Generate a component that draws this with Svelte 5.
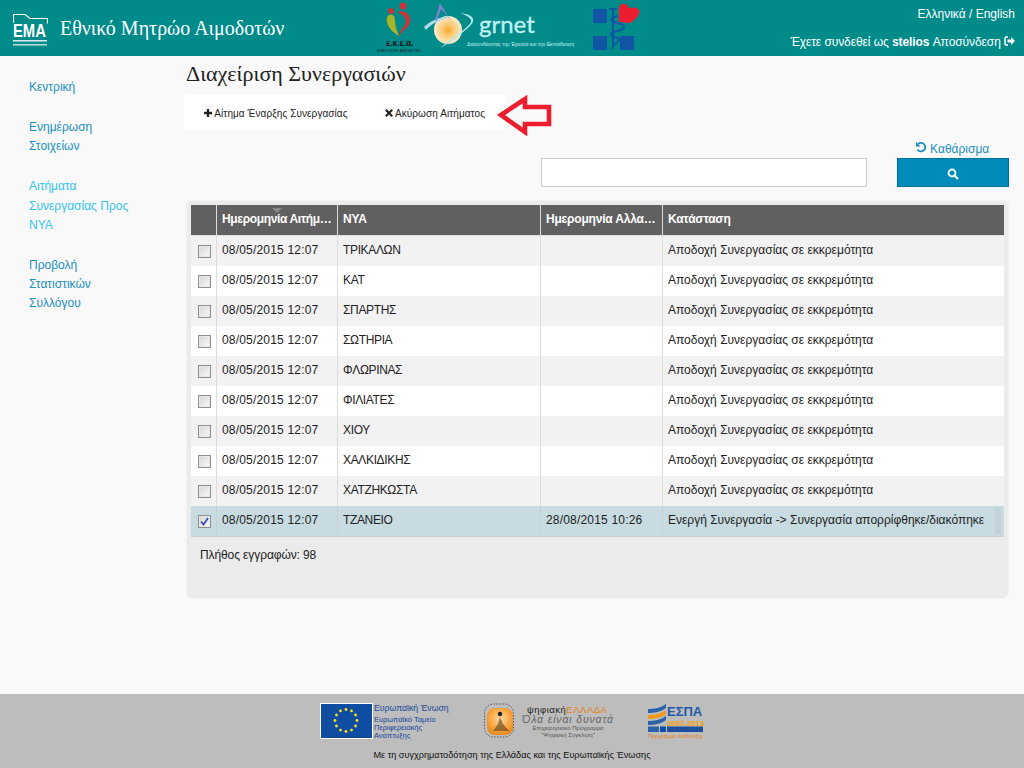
<script>
  const sideGroups = [
    { lines: ['Κεντρική'] },
    { lines: ['Ενημέρωση', 'Στοιχείων'] },
    { lines: ['Αιτήματα', 'Συνεργασίας Προς', 'ΝΥΑ'], active: true },
    { lines: ['Προβολή', 'Στατιστικών', 'Συλλόγου'] }
  ];

  const pending = 'Αποδοχή Συνεργασίας σε εκκρεμότητα';
  const date = '08/05/2015 12:07';
  const rows = [
    { nya: 'ΤΡΙΚΑΛΩΝ', changed: '', status: pending },
    { nya: 'ΚΑΤ', changed: '', status: pending },
    { nya: 'ΣΠΑΡΤΗΣ', changed: '', status: pending },
    { nya: 'ΣΩΤΗΡΙΑ', changed: '', status: pending },
    { nya: 'ΦΛΩΡΙΝΑΣ', changed: '', status: pending },
    { nya: 'ΦΙΛΙΑΤΕΣ', changed: '', status: pending },
    { nya: 'ΧΙΟΥ', changed: '', status: pending },
    { nya: 'ΧΑΛΚΙΔΙΚΗΣ', changed: '', status: pending },
    { nya: 'ΧΑΤΖΗΚΩΣΤΑ', changed: '', status: pending },
    {
      nya: 'ΤΖΑΝΕΙΟ',
      changed: '28/08/2015 10:26',
      status: 'Ενεργή Συνεργασία -> Συνεργασία απορρίφθηκε/διακόπηκε',
      selected: true
    }
  ];

  // stars of the EU flag, on a circle
  const stars = Array.from({ length: 12 }, (_, i) => ({
    x: 26 + 11 * Math.cos((i * Math.PI) / 6),
    y: 17.5 + 11 * Math.sin((i * Math.PI) / 6)
  }));
</script>

<div class="page">
  <header class="topbar">
    <div class="brand">
      <svg class="ema" width="35" height="34" viewBox="0 0 35 34">
        <path d="M.5 9V.5H12l5 4h17.500v5" fill="none" stroke="#fff" stroke-width="1.200" />
        <text x="0" y="23" class="ema-text" transform="scale(0.8 1)">ΕΜΑ</text>
        <rect x="0" y="26" width="34" height="1.500" fill="#d8eeee" />
        <rect x="0" y="30" width="34" height="1.500" fill="#b8e0e0" />
      </svg>
      <span class="site-name">Εθνικό Μητρώο Αιμοδοτών</span>
    </div>

    <div class="partners">
      <svg width="44" height="54" viewBox="0 0 44 54">
        <circle cx="26" cy="6" r="3.500" fill="#c8343a" />
        <circle cx="14" cy="11" r="3" fill="#c8343a" />
        <path d="M20 12c9-3 15 4 13 11-2 5-8 8-11 13 0-6 6-9 7-14 0-5-4-8-9-10z" fill="#c8343a" />
        <path d="M12 15c5-1 6 2 6 6 0 5 2 10 4 15-7-4-11-9-12-14-1-3 0-6 2-7z" fill="#a8b428" />
        <text x="9" y="46" class="ekea">ε.κ.ε.α.</text>
        <text x="0" y="52" class="ekea-sub">ΕΘΕΛΟΝΤΕΣ ΑΙΜΟΔΟΤΕΣ</text>
      </svg>

      <svg width="157" height="54" viewBox="0 0 157 54">
        <defs>
          <radialGradient id="sun">
            <stop offset="0" stop-color="#f5a623" />
            <stop offset="0.35" stop-color="#fbc56b" />
            <stop offset="1" stop-color="#fdeccb" />
          </radialGradient>
        </defs>
        <circle cx="24" cy="30" r="14" fill="url(#sun)" />
        <path d="M0 27C7 20 18 16 28 17 18 19 8 23 2 30z" fill="#a8d8ea" />
        <path d="M11 20C13 13 15 7 16 3c3 5 8 13 12 20C24 16 19 11 17 9 16 12 14 17 13 21z" fill="#7f86cf" />
        <path d="M36 13c10 1 18 5 10 13-8 7-18 16-30 22 12-10 28-20 31-26 1-4-5-7-11-9z" fill="#b4e6ea" />
        <text x="55" y="33" class="grnet-name">grnet</text>
        <text x="43" y="46" class="grnet-tag">Διασυνδέοντας την Έρευνα και την Εκπαίδευση</text>
      </svg>

      <svg class="moh" width="48" height="54" viewBox="0 0 48 54">
        <rect x="1" y="9" width="14" height="14" fill="#1155a5" />
        <rect x="1" y="36" width="14" height="14" fill="#1155a5" />
        <rect x="28" y="36" width="14" height="14" fill="#1155a5" />
        <path d="M21 8v41" stroke="#1155a5" stroke-width="2" />
        <path d="M17 9h8M26 16c-9 2-9 5 0 7s8 6-1 8-7 5 0 7-5 6-4 8" fill="none" stroke="#1155a5" stroke-width="2" />
        <path d="M38 23l-10-1c-2-1-1-4-1-8-1-5 0-9 3-10 3-1 6 1 7 4 3-1 8-1 10 2 2 4-3 9-9 13z" fill="#ed1c2e" />
      </svg>
    </div>

    <div class="account">
      <div class="lang">Ελληνικά / English</div>
      <div class="user">
        Έχετε συνδεθεί ως <b>stelios</b> Αποσύνδεση
        <svg width="11" height="10" viewBox="0 0 11 10">
          <path d="M4 1H2a1 1 0 0 0-1 1v6a1 1 0 0 0 1 1h2" fill="none" stroke="#fff" stroke-width="1.500" />
          <path d="M3.500 3.500H7V1l4 4-4 4V6.500H3.500z" fill="#fff" />
        </svg>
      </div>
    </div>
  </header>

  <div class="content">
    <nav class="sidebar">
      {#each sideGroups as group}
        <div class="side-group" class:active={group.active}>
          {#each group.lines as line}
            <div>{line}</div>
          {/each}
        </div>
      {/each}
    </nav>

    <main class="main">
      <h1>Διαχείριση Συνεργασιών</h1>

      <div class="toolbar-wrap">
        <div class="toolbar">
          <span class="tool">
            <svg width="8" height="8" viewBox="0 0 9 9"><path d="M3.200 0h2.600v3.200H9v2.600H5.800V9H3.200V5.800H0V3.200h3.200z" fill="#222" /></svg>
            Αίτημα Έναρξης Συνεργασίας
          </span>
          <span class="tool cancel">
            <svg width="8" height="8" viewBox="0 0 8 8"><path d="M1.500 0L4 2.500 6.500 0 8 1.500 5.500 4 8 6.500 6.500 8 4 5.500 1.500 8 0 6.500 2.500 4 0 1.500z" fill="#222" /></svg>
            Ακύρωση Αιτήματος
          </span>
        </div>
        <svg class="arrow" width="58" height="44" viewBox="0 0 58 44">
          <path d="M4 23L28 7v8h24v17H28v8z" fill="none" stroke="#ed1c2e" stroke-width="4.600" />
        </svg>
      </div>

      <div class="search">
        <input type="text" class="search-input" />
        <div class="search-side">
          <span class="clear">
            <svg width="12" height="12" viewBox="0 0 12 12">
              <path d="M3 3a4.300 4.300 0 1 1-.6 5.500" fill="none" stroke="#1b8fbf" stroke-width="1.800" />
              <path d="M1 1v4.500h4.500z" fill="#1b8fbf" />
            </svg>
            Καθάρισμα
          </span>
          <button class="search-btn" aria-label="search">
            <svg width="12" height="12" viewBox="0 0 12 12">
              <circle cx="5" cy="5" r="3.500" fill="none" stroke="#fff" stroke-width="1.800" />
              <path d="M7.500 7.500L11 11" stroke="#fff" stroke-width="2.200" />
            </svg>
          </button>
        </div>
      </div>

      <section class="grid">
        <table>
          <colgroup>
            <col class="c-check" />
            <col class="c-date" />
            <col class="c-nya" />
            <col class="c-changed" />
            <col />
          </colgroup>
          <thead>
            <tr>
              <th></th>
              <th class="sorted">Ημερομηνία Αιτήματος</th>
              <th>ΝΥΑ</th>
              <th>Ημερομηνία Αλλαγής</th>
              <th>Κατάσταση</th>
            </tr>
          </thead>
          <tbody>
            {#each rows as row}
              <tr class:selected={row.selected}>
                <td class="check">
                  <span class="box">
                    {#if row.selected}
                      <svg width="9" height="9" viewBox="0 0 9 9">
                        <path d="M1 4.500L3.500 7.500 8 1" fill="none" stroke="#3a4fb0" stroke-width="1.800" />
                      </svg>
                    {/if}
                  </span>
                </td>
                <td class="when">{date}</td>
                <td class="nya">{row.nya}</td>
                <td class="when">{row.changed}</td>
                <td>{row.status}</td>
              </tr>
            {/each}
          </tbody>
        </table>
        <span class="thumb"></span>
        <p class="count">Πλήθος εγγραφών: 98</p>
      </section>
    </main>
  </div>

  <footer class="footer">
    <div class="sponsors">
      <svg width="132" height="37" viewBox="0 0 132 37">
        <rect x="0.500" y="0.500" width="52" height="35" fill="#0f4da2" stroke="#fff" />
        {#each stars as s}
          <circle cx={s.x} cy={s.y} r="1.400" fill="#ffe11a" />
        {/each}
        <text x="54" y="8" class="eu-title">Ευρωπαϊκή Ένωση</text>
        <text x="54" y="19" class="eu-line">Ευρωπαϊκό Ταμείο</text>
        <text x="54" y="27" class="eu-line">Περιφερειακής</text>
        <text x="54" y="35" class="eu-line">Ανάπτυξης</text>
      </svg>

      <svg width="130" height="37" viewBox="0 0 130 37">
        <defs>
          <radialGradient id="orange" cx="0.500" cy="0.400" r="0.700">
            <stop offset="0" stop-color="#ffd9a0" />
            <stop offset="0.600" stop-color="#f7a33a" />
            <stop offset="1" stop-color="#e07f10" />
          </radialGradient>
        </defs>
        <rect x="0.500" y="1" width="29" height="33" rx="9" fill="none" stroke="#555" stroke-dasharray="1.500 1.500" />
        <rect x="3" y="5" width="26" height="27" rx="8" fill="url(#orange)" />
        <circle cx="16" cy="11" r="2.200" fill="#222" />
        <path d="M16 14l3 7 6 7H9l5-7z" fill="#5a4020" opacity="0.600" />
        <text x="43" y="10" class="gr-title">ψηφιακή<tspan fill="#e8800f">ΕΛΛΑΔΑ</tspan></text>
        <text x="38" y="20" class="gr-slogan">Όλα είναι δυνατά</text>
        <text x="84" y="27" class="gr-small" text-anchor="middle">Επιχειρησιακό Πρόγραμμα</text>
        <text x="84" y="33.500" class="gr-small" text-anchor="middle">"Ψηφιακή Σύγκλιση"</text>
      </svg>

      <svg class="espa-logo" width="56" height="37" viewBox="0 0 56 37">
        <path d="M0 6c6 0 13-1 18-5v4C13 9 6 10 0 10z" fill="#2a62ab" />
        <path d="M0 12c6 0 13-1 18-5v4c-5 4-12 5-18 5z" fill="#f39a1e" />
        <path d="M0 18c6 0 13-1 18-5v4c-5 4-12 5-18 5z" fill="#2a62ab" />
        <text x="19" y="13" class="espa">ΕΣΠΑ</text>
        <text x="19" y="22.500" class="espa-years">2007-2013</text>
        <rect x="0" y="23.500" width="11" height="5.500" fill="#2a62ab" />
        <rect x="12" y="23.500" width="6" height="5.500" fill="#0f4da2" />
        <rect x="19" y="23.500" width="36" height="5.500" fill="#1d4f9c" />
        <text x="0" y="35" class="espa-small">Πρόγραμμα ανάπτυξης</text>
      </svg>
    </div>
    <p class="cofund">Με τη συγχρηματοδότηση της Ελλάδας και της Ευρωπαϊκής Ένωσης</p>
  </footer>
</div>

<style>
  :global(body) {
    margin: 0;
    background: #f9f9f9;
    font-family: "Liberation Sans", Arial, sans-serif;
    color: #222;
  }

  .page {
    display: flex;
    flex-direction: column;
    height: 768px;
    overflow: hidden;
  }

  .topbar {
    flex: none;
    display: flex;
    height: 56px;
    background: #008b8b;
    color: #fff;
  }

  .brand {
    display: flex;
    align-items: center;
    width: 377px;
    padding-left: 13px;
    box-sizing: border-box;
  }

  .ema {
    align-self: flex-start;
    margin-top: 14px;
  }

  .ema-text {
    font: bold 18.500px "Liberation Sans", sans-serif;
    fill: #fff;
  }

  .site-name {
    margin-left: 12px;
    font: 20px "Liberation Serif", serif;
  }

  .partners {
    display: flex;
    align-items: flex-start;
    gap: 3px;
  }

  .moh {
    margin-left: 8px;
  }

  .ekea {
    font: bold 8.500px "Liberation Sans", sans-serif;
    fill: #111;
  }

  .ekea-sub {
    font: 3.600px "Liberation Sans", sans-serif;
    fill: #222;
  }

  .grnet-name {
    font: 24px Lato, sans-serif;
    fill: #c0f2f2;
    stroke: #c0f2f2;
    stroke-width: 0.300px;
  }

  .grnet-tag {
    font: 5.100px "Liberation Sans", sans-serif;
    fill: #d0f4f4;
  }

  .account {
    margin-left: auto;
    padding: 7px 9px 0 0;
    text-align: right;
    font-size: 12px;
  }

  .lang {
    margin-bottom: 14px;
  }

  .user {
    letter-spacing: -0.080px;
  }

  .content {
    flex: 1;
    display: flex;
  }

  .sidebar {
    flex: none;
    width: 155px;
    padding: 22px 0 0 29px;
    font-size: 12px;
    line-height: 19.300px;
    color: #1b8fbf;
  }

  .side-group {
    margin-bottom: 20.700px;
  }

  .side-group.active {
    color: #33c3f0;
  }

  .main {
    width: 825px;
    padding-left: 2px;
  }

  h1 {
    margin: 6px 0 10px;
    font: 22px/23px "Liberation Serif", serif;
    color: #222;
  }

  .toolbar-wrap {
    position: relative;
  }

  .toolbar {
    display: flex;
    width: 321px;
    height: 35px;
    margin-left: -2px;
    align-items: center;
    padding: 1px 0 0 20px;
    box-sizing: border-box;
    background: #fff;
    border-radius: 3px;
    font-size: 10px;
    color: #222;
    letter-spacing: 0.080px;
  }

  .cancel {
    margin-left: 37px;
  }

  .arrow {
    position: absolute;
    left: 311px;
    top: -3px;
  }

  .search {
    display: flex;
    align-items: flex-end;
    margin: 11px 0 14px 355px;
  }

  .search-input {
    width: 326px;
    height: 29px;
    box-sizing: border-box;
    border: 1px solid #ccc;
    background: #fff;
    margin: 0;
  }

  .search-side {
    margin-left: 30px;
    text-align: center;
    font-size: 12px;
    color: #1b8fbf;
  }

  .clear {
    display: block;
    margin-bottom: 1px;
    padding-right: 2px;
    line-height: 15px;
  }

  .search-btn {
    display: block;
    width: 112px;
    height: 29px;
    padding: 0;
    border: 1px solid #007095;
    background: #008cba;
  }

  .search-btn svg {
    display: block;
    margin: 3px auto 0;
  }

  .grid {
    position: relative;
    width: 821px;
    height: 397px;
    margin-left: 1px;
    padding: 4px;
    box-sizing: border-box;
    background: #ebebeb;
    border-radius: 5px;
    outline: 1px solid #f2f2f2;
  }

  table {
    width: 813px;
    table-layout: fixed;
    border-collapse: separate;
    border-spacing: 0;
    font-size: 12px;
  }

  .c-check {
    width: 26px;
  }

  .c-date {
    width: 121px;
  }

  .c-nya {
    width: 203px;
  }

  .c-changed {
    width: 122px;
  }

  th {
    height: 31px;
    padding: 0 3px 2px 5px;
    background: #606060;
    color: #fff;
    text-align: left;
    font-weight: bold;
    letter-spacing: -0.200px;
    white-space: nowrap;
    overflow: hidden;
    text-overflow: ellipsis;
    border-right: 1px solid #ddd;
    border-bottom: 1px solid #ddd;
    box-sizing: border-box;
  }

  th:last-child,
  td:last-child {
    border-right: 0;
  }

  th.sorted {
    position: relative;
    letter-spacing: -0.350px;
  }

  th.sorted::before {
    content: "";
    position: absolute;
    left: 55px;
    top: 3px;
    border: 5px solid transparent;
    border-top-color: #8a8a8a;
  }

  td {
    height: 30px;
    padding: 0 5px 2px;
    background: #fff;
    color: #222;
    white-space: nowrap;
    overflow: hidden;
    border-right: 1px solid #ddd;
    box-sizing: border-box;
  }

  td.when {
    letter-spacing: 0.190px;
  }

  td.nya {
    letter-spacing: -0.350px;
  }

  tbody tr:nth-child(odd) td {
    background: #f2f2f2;
  }

  tbody tr.selected td {
    background: #c8dbe0;
    border-right-color: #c0d3d8;
    border-bottom: 1px solid #d0cfd0;
    height: 31px;
  }

  td.check {
    padding: 1px 0 0 7px;
  }

  .box {
    display: block;
    width: 13px;
    height: 13px;
    box-sizing: border-box;
    border: 1px solid #8e8f8f;
    background: linear-gradient(135deg, #d4d4d4, #fbfbfb);
    box-shadow: inset 0 0 0 1px #e8e8e8;
  }

  .box svg {
    display: block;
    margin: 1px;
  }

  .thumb {
    position: absolute;
    left: 808px;
    top: 306px;
    width: 6px;
    height: 27px;
    border-radius: 3px;
    background: #bfd3d8;
  }

  .count {
    margin: 11px 0 0 9px;
    font-size: 12px;
    letter-spacing: -0.100px;
    color: #222;
  }

  .footer {
    flex: none;
    height: 74px;
    background: #bdbdbd;
    text-align: center;
  }

  .sponsors {
    display: flex;
    justify-content: flex-start;
    padding: 9px 0 0 320px;
    gap: 32px;
    height: 37px;
  }

  .espa-logo {
    margin-left: 2px;
  }

  .cofund {
    margin: 10px 0 0;
    font-size: 9.150px;
    color: #111;
  }

  .eu-title {
    font: 8.700px "Liberation Sans", sans-serif;
    fill: #17479e;
  }

  .eu-line {
    font: 7.500px "Liberation Sans", sans-serif;
    fill: #17479e;
  }

  .gr-title {
    font: 9.500px "Liberation Sans", sans-serif;
    fill: #222;
    letter-spacing: 0.500px;
  }

  .gr-slogan {
    font: italic 10.500px "Liberation Sans", sans-serif;
    fill: #666;
    letter-spacing: 0.850px;
  }

  .gr-small {
    font: 6px "Liberation Sans", sans-serif;
    fill: #555;
  }

  .espa {
    font: bold 13px "Liberation Sans", sans-serif;
    fill: #1d5aa8;
  }

  .espa-years {
    font: bold 7.800px "Liberation Sans", sans-serif;
    fill: #f5a000;
  }

  .espa-small {
    font: 5.400px "Liberation Sans", sans-serif;
    fill: #e8800f;
  }
</style>
